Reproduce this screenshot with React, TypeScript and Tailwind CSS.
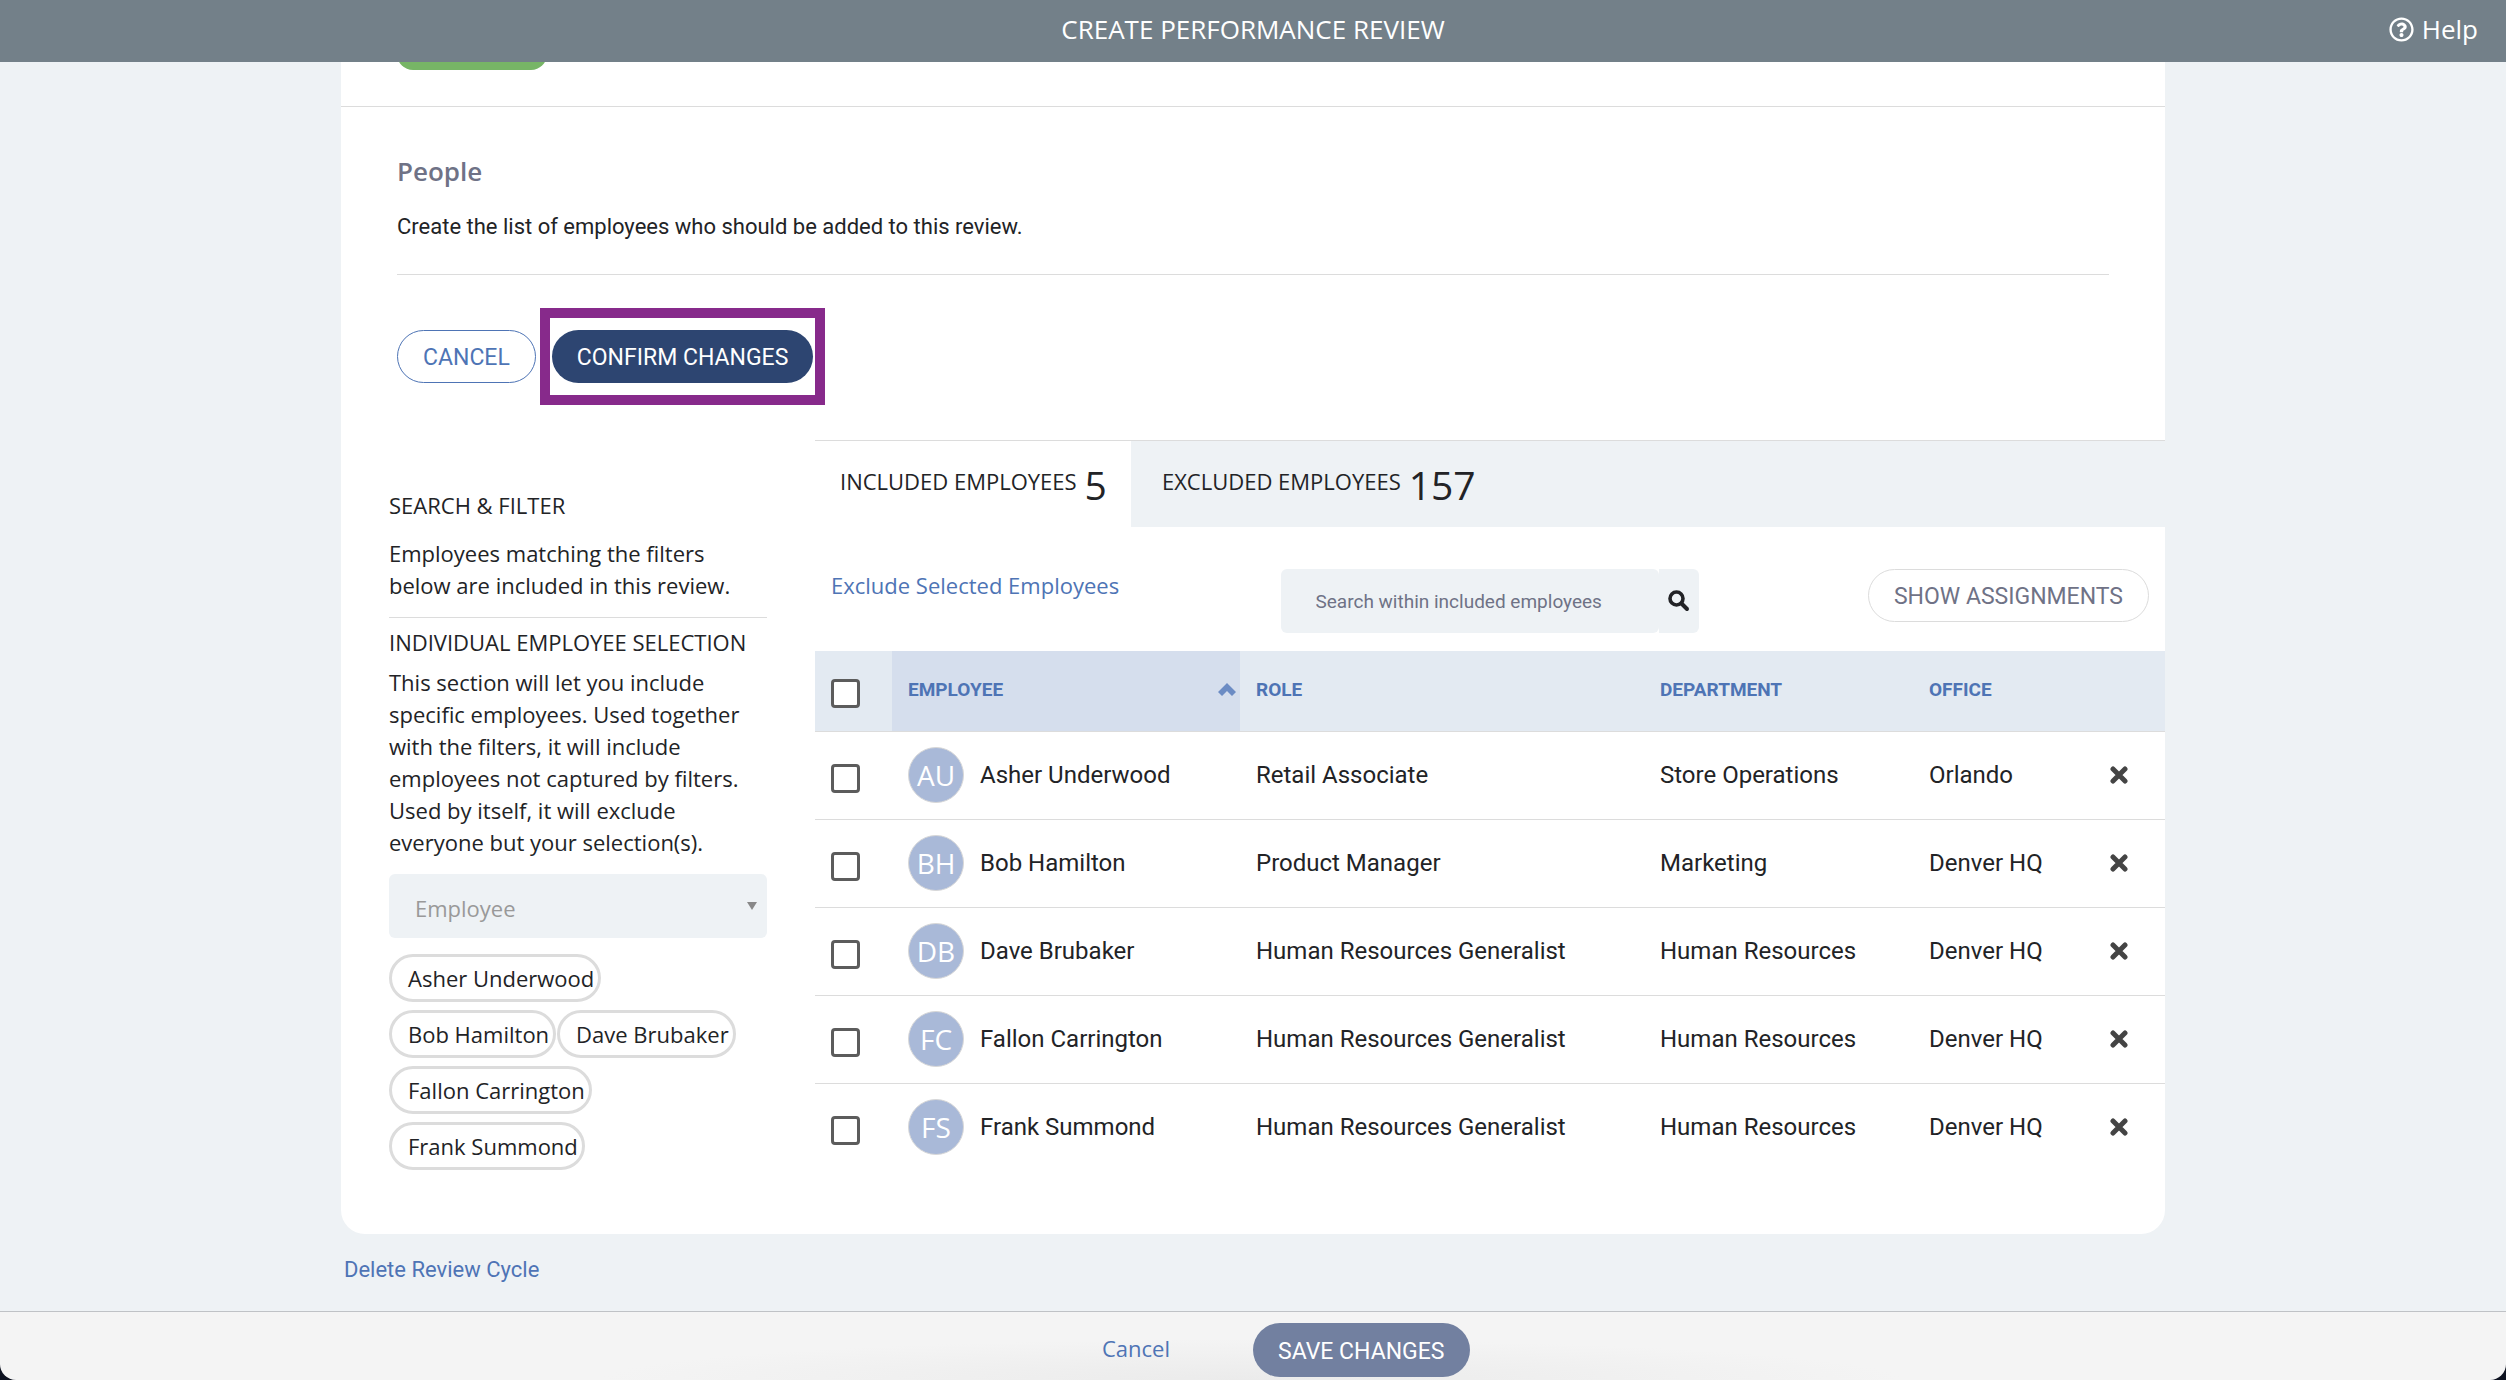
import { useState } from "react";
import { FaRegQuestionCircle } from "react-icons/fa";

interface Employee {
  initials: string;
  name: string;
  role: string;
  department: string;
  office: string;
}

interface TabProps {
  label: string;
  count: number;
  active: boolean;
  onClick: () => void;
}

const employees: Employee[] = [
  {
    initials: "AU",
    name: "Asher Underwood",
    role: "Retail Associate",
    department: "Store Operations",
    office: "Orlando",
  },
  {
    initials: "BH",
    name: "Bob Hamilton",
    role: "Product Manager",
    department: "Marketing",
    office: "Denver HQ",
  },
  {
    initials: "DB",
    name: "Dave Brubaker",
    role: "Human Resources Generalist",
    department: "Human Resources",
    office: "Denver HQ",
  },
  {
    initials: "FC",
    name: "Fallon Carrington",
    role: "Human Resources Generalist",
    department: "Human Resources",
    office: "Denver HQ",
  },
  {
    initials: "FS",
    name: "Frank Summond",
    role: "Human Resources Generalist",
    department: "Human Resources",
    office: "Denver HQ",
  },
];

const Checkbox = ({ label }: { label: string }) => (
  <input
    type="checkbox"
    aria-label={label}
    className="mt-1.5 block size-[29px] appearance-none rounded-[4px] border-3 border-[#5c5c5c] bg-white checked:bg-[#4e74b5]"
  />
);

const Tab = ({ label, count, active, onClick }: TabProps) => (
  <button
    type="button"
    role="tab"
    aria-selected={active}
    onClick={onClick}
    className={`${active ? "bg-white pr-6 pl-[25px]" : "bg-[#eef2f5] pr-6 pl-[31px]"} flex h-[86px] items-center gap-2 pt-0.5`}
  >
    <span className="pb-2">{label}</span>
    <span className="text-[39px] leading-[48px]">{count}</span>
  </button>
);

const Sidebar = () => (
  <aside className="w-[378px] shrink-0 pt-[49px] leading-8">
    <h2>SEARCH &amp; FILTER</h2>
    <p className="mt-4">
      Employees matching the filters below are included in this review.
    </p>
    <hr className="mt-4 border-[#dcdcdc]" />
    <h2 className="mt-2">INDIVIDUAL EMPLOYEE SELECTION</h2>
    <p className="mt-2">
      This section will let you include specific employees. Used together with
      the filters, it will include employees not captured by filters. Used by
      itself, it will exclude everyone but your selection(s).
    </p>
    <div className="relative mt-4">
      <select
        aria-label="Employee"
        defaultValue=""
        className="h-16 w-full appearance-none rounded-md bg-[#eef2f5] pt-1 pl-[26px] text-[#999]"
      >
        <option value="">Employee</option>
      </select>
      <svg
        viewBox="0 0 10 8"
        className="pointer-events-none absolute top-7 right-[10px] w-[10px] fill-[#888]"
      >
        <path d="M0 0h10L5 8z" />
      </svg>
    </div>
    <ul className="mt-4 flex flex-wrap gap-x-px gap-y-2">
      {employees.map((employee) => (
        <li
          key={employee.name}
          className="flex h-12 items-center rounded-full border-3 border-[#dcdcdc] pr-1 pl-4"
        >
          {employee.name}
        </li>
      ))}
    </ul>
  </aside>
);

const EmployeeTable = () => (
  <table className="w-full table-fixed text-left font-[Roboto,sans-serif] text-[24px]">
    <colgroup>
      <col className="w-[77px]" />
      <col className="w-[348px]" />
      <col className="w-[404px]" />
      <col className="w-[269px]" />
      <col />
      <col className="w-[92px]" />
    </colgroup>
    <thead className="text-[19px] text-[#4e74b5]">
      <tr className="h-20 border-b border-[#dcdcdc] bg-[#e3eaf2]">
        <th className="pl-4">
          <Checkbox label="Select all employees" />
        </th>
        <th className="bg-[#d5deed] px-4 font-bold" aria-sort="ascending">
          <div className="flex items-center justify-between pb-0.5">
            EMPLOYEE
            <svg viewBox="0 0 18 13" className="-mr-3 w-[18px] fill-[#6c8cc4]">
              <path d="M9 0l9 9-4 4-5-5-5 5-4-4z" />
            </svg>
          </div>
        </th>
        <th className="px-4 pb-0.5 font-bold">ROLE</th>
        <th className="px-4 pb-0.5 font-bold">DEPARTMENT</th>
        <th className="px-4 pb-0.5 font-bold">OFFICE</th>
        <th aria-label="Remove" />
      </tr>
    </thead>
    <tbody>
      {employees.map((employee) => (
        <tr
          key={employee.name}
          className="h-[88px] border-b border-[#dcdcdc] last:border-b-0"
        >
          <td className="pl-4">
            <Checkbox label={`Select ${employee.name}`} />
          </td>
          <td className="px-4">
            <div className="flex items-center gap-4">
              <span className="flex size-14 shrink-0 items-center justify-center rounded-full border border-[#d8d8d8] bg-[#a9b9d8] font-['Open_Sans',sans-serif] text-[28px] text-white">
                {employee.initials}
              </span>
              {employee.name}
            </div>
          </td>
          <td className="px-4">{employee.role}</td>
          <td className="px-4">{employee.department}</td>
          <td className="px-4 whitespace-nowrap">{employee.office}</td>
          <td className="pl-[37px]">
            <button
              type="button"
              aria-label={`Remove ${employee.name}`}
              className="block"
            >
              <svg
                viewBox="0 0 18 18"
                className="size-[18px] stroke-[#444] stroke-5"
                strokeLinecap="round"
              >
                <path d="M3 3l12 12M15 3L3 15" />
              </svg>
            </button>
          </td>
        </tr>
      ))}
    </tbody>
  </table>
);

const App = () => {
  const [activeTab, setActiveTab] = useState<string>("included");
  const [search, setSearch] = useState<string>("");

  return (
    <div className="flex h-screen flex-col overflow-hidden bg-[#0d1220] font-['Open_Sans',sans-serif] text-[22px] text-[#222326]">
      <header className="relative flex h-[62px] shrink-0 items-center justify-center bg-[#738089] pb-1 text-[26px] text-white">
        <h1>CREATE PERFORMANCE REVIEW</h1>
        <a href="#help" className="absolute right-7 flex items-center gap-2">
          <FaRegQuestionCircle className="size-[25px]" />
          Help
        </a>
      </header>

      <div className="min-h-0 flex-1 overflow-hidden bg-[#eef2f5]">
        <main className="mx-auto max-w-[1824px]">
          <div className="rounded-b-3xl bg-white">
            <div className="h-[45px] border-b border-[#dcdcdc] px-14">
              <div className="h-2 w-[150px] overflow-hidden">
                <div className="-mt-11 h-[52px] rounded-2xl bg-[#77b566]" />
              </div>
            </div>

            <section className="px-14 pt-[46px]">
              <h2 className="text-[26px] leading-9 font-semibold text-[#6f7286]">
                People
              </h2>
              <p className="mt-[22px] font-[Roboto,sans-serif] leading-8">
                Create the list of employees who should be added to this review.
              </p>
              <hr className="mt-[31px] border-[#dcdcdc]" />
              <div className="mt-[33px] flex items-center font-[Roboto,sans-serif] text-[23px]">
                <button
                  type="button"
                  className="h-[53px] rounded-full border border-[#4e74b5] px-[25px] pt-1 text-[#4e74b5]"
                >
                  CANCEL
                </button>
                <div className="ml-1 border-10 border-[#872a8b] px-[2px] py-3">
                  <button
                    type="button"
                    className="block h-[53px] rounded-full bg-[#2d4571] px-[25px] pt-1 text-white"
                  >
                    CONFIRM CHANGES
                  </button>
                </div>
              </div>
            </section>

            <div className="mt-[35px] flex pb-[63px] pl-12">
              <Sidebar />
              <section className="ml-12 min-w-0 flex-1 border-t border-[#dcdcdc]">
                <div role="tablist" className="flex bg-[#eef2f5]">
                  <Tab
                    label="INCLUDED EMPLOYEES"
                    count={5}
                    active={activeTab === "included"}
                    onClick={() => setActiveTab("included")}
                  />
                  <Tab
                    label="EXCLUDED EMPLOYEES"
                    count={157}
                    active={activeTab === "excluded"}
                    onClick={() => setActiveTab("excluded")}
                  />
                </div>
                <div className="flex h-[124px] items-start justify-between px-4 pt-[42px]">
                  <a href="#exclude" className="leading-8 text-[#4e74b5]">
                    Exclude Selected Employees
                  </a>
                  <div className="mr-2 flex">
                    <input
                      type="text"
                      aria-label="Search within included employees"
                      placeholder="Search within included employees"
                      value={search}
                      onChange={(e) => setSearch(e.target.value)}
                      className="h-16 w-[378px] rounded-md bg-[#eef2f5] px-[35px] font-[Roboto,sans-serif] text-[19px] placeholder:text-[#6f7286]"
                    />
                    <button
                      type="button"
                      aria-label="Search"
                      className="flex h-16 w-10 items-center rounded-r-md bg-[#eef2f5] pl-[9px]"
                    >
                      <svg
                        viewBox="0 0 22 22"
                        className="size-[22px] fill-none stroke-[#222326]"
                      >
                        <circle cx="8.5" cy="8.5" r="6.5" strokeWidth="3.6" />
                        <path
                          d="M13.5 13.5l5.5 5.5"
                          strokeWidth="4"
                          strokeLinecap="round"
                        />
                      </svg>
                    </button>
                  </div>
                  <button
                    type="button"
                    className="h-[53px] rounded-full border border-[#dcdcdc] px-[25px] pt-1 font-[Roboto,sans-serif] text-[23px] text-[#6f7286]"
                  >
                    SHOW ASSIGNMENTS
                  </button>
                </div>
                <EmployeeTable />
              </section>
            </div>
          </div>
          <a
            href="#delete"
            className="mt-5 ml-[3px] inline-block font-[Roboto,sans-serif] leading-8 text-[#4e74b5]"
          >
            Delete Review Cycle
          </a>
        </main>
      </div>

      <div className="shrink-0 bg-[#eef2f5]">
        <div className="h-px bg-[#bfc2c6]" />
      </div>
      <footer className="grid h-[68px] shrink-0 grid-cols-2 items-center rounded-b-2xl bg-[#f4f4f4] bg-[radial-gradient(ellipse_26%_60%_at_50%_100%,#ebebeb,#f4f4f4)] pt-1">
        <a href="#cancel" className="mr-[83px] justify-self-end text-[#4e74b5]">
          Cancel
        </a>
        <button
          type="button"
          className="mt-1 h-[54px] justify-self-start rounded-full bg-[#7280a0] px-[25px] pt-1 font-[Roboto,sans-serif] text-[23px] text-white"
        >
          SAVE CHANGES
        </button>
      </footer>
    </div>
  );
};

export default App;
